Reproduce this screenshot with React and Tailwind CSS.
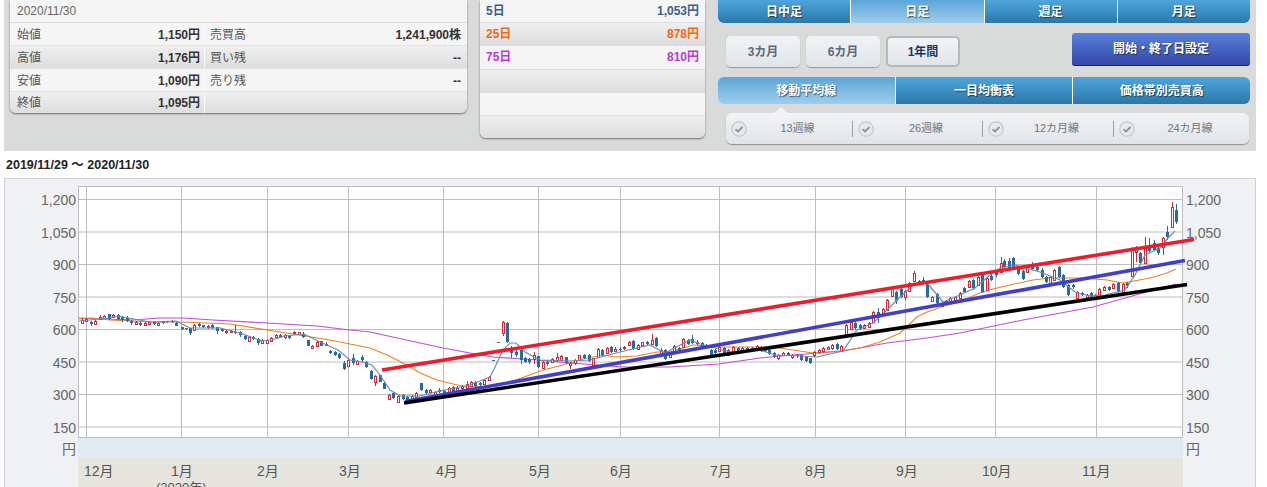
const font = "font-['Liberation_Sans','Noto_Sans_CJK_JP',sans-serif]";

const shadow = '[text-shadow:1px_1px_1px_rgba(0,0,0,0.55)]';

const ohlc = [
  ['始値', '1,150円', '売買高', '1,241,900株'],
  ['高値', '1,176円', '買い残', '--'],
  ['安値', '1,090円', '売り残', '--'],
  ['終値', '1,095円', '', ''],
];

const averages = [
  { label: '5日', value: '1,053円', color: 'text-[#3b5f8f]' },
  { label: '25日', value: '878円', color: 'text-[#ee6a10]' },
  { label: '75日', value: '810円', color: 'text-[#b838d8]' },
  { label: '', value: '', color: '' },
  { label: '', value: '', color: '' },
  { label: '', value: '', color: '' },
];

const spans = ['日中足', '日足', '週足', '月足'];
const ranges = ['3カ月', '6カ月', '1年間'];
const lineTabs = ['移動平均線', '一目均衡表', '価格帯別売買高'];
const lineChecks = [
  { label: '13週線', w: 'w-[127px]' },
  { label: '26週線', w: 'w-[130px]' },
  { label: '12カ月線', w: 'w-[131px]' },
  { label: '24カ月線', w: 'flex-1' },
];

const yLabels = ['1,200', '1,050', '900', '750', '600', '450', '300', '150'];
const gridY = [199.5, 232, 264.5, 297, 329.5, 362, 394.5, 427];
const gridX = [86, 181, 267, 348, 443, 538, 620, 719, 815, 905, 995, 1096];
const months = [
  { label: '12月', left: 'left-[6px]' },
  { label: '1月', left: 'left-[93px]' },
  { label: '2月', left: 'left-[179px]' },
  { label: '3月', left: 'left-[261px]' },
  { label: '4月', left: 'left-[358px]' },
  { label: '5月', left: 'left-[451px]' },
  { label: '6月', left: 'left-[532px]' },
  { label: '7月', left: 'left-[632px]' },
  { label: '8月', left: 'left-[727px]' },
  { label: '9月', left: 'left-[818px]' },
  { label: '10月', left: 'left-[904px]' },
  { label: '11月', left: 'left-[1004px]' },
];

// x, top, bottom, colour, wick top, wick bottom
const candles = [
  [82,320,323,'r',318,324],[86,319,321,'r',318,322],[91,322,324,'b',321,326],[95,321,324,'r',320,325],[100,317,319,'r',315,320],[104,316,318,'r',315,319],
  [109,314,319,'b',314,320],[113,315,317,'r',314,318],[118,315,319,'b',314,320],[122,317,320,'b',316,322],[127,318,321,'b',316,322],[131,321,323,'b',320,325],
  [136,322,324,'r',321,325],[140,323,325,'b',322,326],[145,323,325,'r',322,325],[149,322,324,'r',322,325],[154,322,324,'b',321,325],[158,323,325,'r',322,326],
  [163,322,323,'b',321,324],[167,321,322,'b',321,323],[172,321,322,'b',320,323],[176,323,326,'b',322,326],[182,327,329,'b',327,330],[186,328,329,'b',328,330],
  [190,328,333,'b',328,335],[194,325,330,'r',324,331],[199,324,326,'b',323,327],[203,325,327,'b',325,328],[208,326,327,'r',325,329],[212,325,328,'b',324,329],
  [217,327,331,'b',327,334],[222,329,331,'b',329,332],[226,331,332,'r',330,334],[231,331,332,'r',330,333],[235,332,333,'b',325,334],[240,332,335,'b',331,337],
  [245,336,339,'b',335,340],[249,337,341,'r',336,342],[253,337,339,'b',336,340],[258,339,343,'b',338,345],[262,340,343,'r',339,344],[267,340,343,'r',339,344],
  [271,338,341,'r',337,342],[276,335,337,'r',334,338],[280,335,337,'b',334,338],[285,335,337,'r',334,339],[289,336,338,'b',335,339],[294,332,333,'r',331,334],
  [299,332,334,'r',332,335],[303,334,337,'b',332,338],[308,340,346,'b',340,346],[312,346,348,'r',345,349],[317,342,346,'r',341,347],[321,341,346,'b',341,346],
  [326,344,345,'r',342,346],[330,351,353,'b',350,354],[335,352,355,'b',351,356],[339,354,358,'b',353,359],[344,363,369,'b',361,370],[348,360,366,'r',358,367],
  [353,358,363,'b',354,365],[357,361,364,'r',360,365],[362,357,360,'b',355,362],[366,362,367,'b',361,368],[371,371,379,'b',370,380],[375,376,382,'r',375,386],
  [380,375,382,'b',375,382],[384,383,389,'b',381,389],[389,395,399,'r',394,400],[393,393,398,'b',392,399],[398,396,402,'r',395,403],[403,395,399,'b',394,400],
  [407,397,401,'b',396,402],[412,396,399,'r',395,400],[416,393,397,'r',392,398],[421,383,390,'b',383,391],[426,390,393,'b',389,394],[430,390,392,'r',389,393],
  [435,392,395,'r',391,396],[439,390,392,'b',388,393],[444,391,394,'b',390,396],[449,388,392,'r',387,394],[453,387,392,'b',386,393],[457,388,391,'r',386,393],
  [462,386,388,'r',385,390],[467,384,388,'r',381,389],[471,382,386,'r',381,387],[475,382,386,'b',381,387],[480,383,385,'b',382,386],[484,380,384,'r',379,385],
  [489,377,380,'r',376,381],[493,360,361,'b',360,361],[498,342,343,'b',342,343],[503,322,333,'r',321,336],[507,323,342,'b',322,343],[511,348,353,'b',346,358],
  [516,352,355,'b',349,357],[521,350,360,'b',349,364],[525,358,362,'b',357,363],[529,359,362,'b',358,364],[534,355,359,'r',352,364],[538,356,367,'b',356,368],
  [543,362,368,'r',361,369],[547,362,364,'b',360,366],[552,359,362,'r',358,363],[557,357,360,'r',353,362],[561,356,360,'r',355,361],[566,357,363,'b',357,364],
  [570,363,365,'r',362,369],[575,360,363,'r',359,365],[579,355,360,'r',355,361],[584,355,358,'b',354,359],[589,355,361,'b',354,362],[593,358,365,'r',358,366],
  [598,349,357,'r',348,358],[602,350,355,'b',349,356],[607,348,353,'r',347,354],[611,347,352,'b',346,353],[615,349,351,'r',347,352],[620,349,350,'b',347,351],
  [624,347,348,'r',346,350],[629,342,345,'r',341,346],[633,341,349,'b',340,350],[638,345,349,'r',344,350],[642,342,345,'r',342,346],[647,342,344,'b',341,345],
  [652,340,344,'r',334,345],[656,338,346,'b',337,347],[661,350,353,'r',348,354],[665,350,359,'b',349,360],[670,353,357,'r',352,358],[674,346,351,'r',345,352],
  [679,348,350,'b',347,352],[683,339,347,'r',338,348],[688,340,344,'b',339,345],[692,339,343,'b',335,344],[697,342,343,'r',340,345],[702,343,347,'b',342,348],
  [706,345,347,'b',344,348],[711,350,355,'b',349,356],[715,350,353,'b',349,354],[719,347,351,'r',346,352],[724,348,353,'b',347,354],[728,350,355,'r',349,356],
  [733,347,351,'r',346,352],[738,348,351,'b',347,352],[742,348,350,'r',347,351],[747,348,350,'b',347,351],[752,348,350,'b',347,351],[757,346,350,'r',345,351],
  [761,347,351,'b',346,352],[765,349,351,'b',348,352],[769,350,354,'b',349,355],[774,353,357,'b',352,358],[778,355,358,'r',354,360],[783,353,355,'r',352,356],
  [788,353,355,'b',352,356],[792,355,357,'r',354,359],[797,355,356,'b',354,358],[801,355,360,'b',354,361],[806,357,361,'b',356,362],[810,358,363,'b',358,364],
  [814,352,355,'r',351,357],[819,350,352,'r',349,354],[823,348,351,'r',347,353],[828,347,349,'r',346,350],[832,345,348,'r',344,350],[837,344,349,'b',343,350],
  [841,346,351,'r',345,352],[846,325,334,'r',324,335],[851,322,329,'r',321,330],[855,323,328,'b',322,330],[860,325,329,'b',324,330],[864,325,328,'r',324,329],
  [869,323,327,'r',322,328],[873,312,322,'r',311,323],[878,312,315,'b',308,323],[883,309,313,'r',308,315],[887,300,310,'r',299,311],[892,288,296,'r',287,297],
  [896,292,301,'b',291,304],[901,289,297,'b',288,298],[905,291,297,'r',290,300],[909,283,291,'r',282,292],[914,273,281,'r',271,282],[919,281,284,'b',280,285],
  [923,280,283,'b',277,284],[927,284,297,'b',283,298],[932,297,301,'r',296,302],[937,294,303,'b',293,304],[942,303,306,'r',302,307],[946,301,303,'b',300,305],
  [950,298,301,'r',297,302],[955,297,302,'r',296,303],[960,293,298,'r',292,299],[964,288,292,'b',287,293],[969,281,287,'r',280,288],[973,280,288,'b',279,290],
  [978,277,285,'r',276,286],[982,273,292,'b',272,293],[987,278,290,'r',277,291],[991,276,280,'b',274,281],[996,272,275,'b',271,277],[1001,263,272,'r',257,273],
  [1004,261,267,'b',259,268],[1009,261,268,'b',258,269],[1013,258,267,'b',257,268],[1018,267,274,'b',266,275],[1023,271,279,'b',270,280],[1027,267,272,'r',266,273],
  [1032,264,269,'b',262,270],[1037,267,270,'b',266,272],[1042,270,277,'b',268,278],[1046,277,282,'b',276,283],[1050,277,283,'r',276,284],[1054,270,280,'r',269,281],
  [1059,267,277,'b',266,278],[1063,275,287,'b',274,288],[1068,285,295,'b',284,296],[1073,285,287,'b',284,289],[1077,292,298,'r',291,299],[1082,293,295,'b',292,296],
  [1087,295,297,'r',294,299],[1091,293,297,'b',292,298],[1095,295,297,'r',294,298],[1099,289,295,'r',288,296],[1104,287,290,'r',286,291],[1109,287,290,'b',286,291],
  [1113,284,288,'r',283,289],[1118,283,292,'b',282,293],[1123,284,292,'r',283,293],[1127,283,286,'b',282,288],[1132,248,276,'r',247,277],[1136,247,252,'r',246,262],
  [1140,253,263,'b',252,264],[1145,247,263,'r',237,264],[1149,245,251,'b',238,252],[1154,243,250,'b',240,251],[1158,248,253,'b',247,255],[1163,238,247,'r',237,255],
  [1167,232,237,'b',226,240],[1172,207,227,'r',202,228],[1176,210,222,'b',204,224],
];

const ma5 = '79,321 110,318 118,316 150,322 176,321 190,328 220,328 240,333 262,341 272,340 285,336 304,334 320,342 338,350 350,360 362,362 372,365 380,375 390,390 400,396 420,396 440,391 470,385 490,377 496,365 503,350 510,343 516,343 525,352 540,360 570,361 590,360 620,352 650,345 665,353 690,340 700,344 730,352 760,350 775,355 800,356 817,357 843,351 857,330 873,323 887,310 897,300 913,285 927,283 943,302 960,295 975,288 990,275 1000,268 1015,265 1040,272 1060,280 1075,292 1090,296 1105,295 1125,290 1135,275 1145,255 1160,248 1168,238 1175,231';
const ma25 = '79,319 92,318 110,320 150,322 180,322 230,324 280,332 330,340 350,344 370,348 387,355 403,363 420,373 437,380 453,384 467,387 498,386 510,382 527,376 543,370 563,365 583,359 603,355 615,357 637,356 657,352 670,352 693,345 720,347 753,347 773,347 793,350 813,353 840,351 860,348 880,342 900,333 917,317 927,312 947,305 960,302 977,294 993,289 1010,285 1033,280 1050,278 1083,278 1107,280 1123,283 1150,278 1167,273 1176,269';
const ma75 = '79,318 133,320 160,318 183,318 213,320 267,323 317,326 350,330 370,332 420,343 443,348 470,353 493,357 537,360 570,363 597,365 623,367 670,367 719,364 760,358 793,355 843,351 887,343 927,338 960,333 1023,320 1093,307 1143,293 1176,284';

function AverageTable() {
  return (
    <div className="w-[225px] h-[138px] mt-0 ml-[13px] rounded-b-md overflow-hidden shadow-[0_1px_2px_rgba(0,0,0,0.5)] flex flex-col">
      {averages.map((row, i) => (
        <div
          key={i}
          className={`flex-1 flex items-center justify-between pl-[6px] pr-[6px] text-xs font-bold border-b border-[#dcdcdc] last:border-b-0 ${row.color} ${i % 2 === 0 ? 'bg-[#f5f5f5]' : 'bg-gradient-to-b from-[#efefef] to-[#dddddd]'}`}
        >
          <span>{row.label}</span>
          <span>{row.value}</span>
        </div>
      ))}
    </div>
  );
}

function PriceTable() {
  return (
    <div className="w-[457px] h-[113px] ml-[6px] rounded-b-md overflow-hidden shadow-[0_1px_2px_rgba(0,0,0,0.5)] flex flex-col text-xs text-[#555]">
      <div className="h-[23px] bg-[#f5f5f5] border-b border-[#dcdcdc] flex items-center pl-[7px] text-[#6b6460]">2020/11/30</div>
      {ohlc.map((row, i) => (
        <div
          key={row[0]}
          className={`h-[23px] last:h-[21px] grid grid-cols-[195px_1fr] pt-[2px] last:pt-px border-b border-[#e2e2e2] last:border-b-0 ${i % 2 === 0 ? 'bg-[#f5f5f5]' : 'bg-gradient-to-b from-[#efefef] to-[#dddddd]'}`}
        >
          <div className="flex items-center justify-between pl-[7px] pr-[4px] border-r border-[#fafafa]">
            <span>{row[0]}</span>
            <b className="text-[#333]">{row[1]}</b>
          </div>
          <div className="flex items-center justify-between pl-[5px] pr-[6px]">
            <span>{row[2]}</span>
            <b className="text-[#333]">{row[3]}</b>
          </div>
        </div>
      ))}
    </div>
  );
}

function Tabs({ items, active, height }) {
  return (
    <div className={`flex rounded-b-md overflow-hidden ${height}`}>
      {items.map((item, i) => (
        <div
          key={item}
          className={`flex-1 flex items-center justify-center text-xs font-bold text-white border-r border-white last:border-r-0 ${shadow} ${i === active ? 'bg-gradient-to-b from-[#5aa5da] to-[#9fcdea]' : 'bg-gradient-to-b from-[#4fa5dc] to-[#2a78aa]'}`}
        >
          {item}
        </div>
      ))}
    </div>
  );
}

function CheckIcon() {
  return (
    <svg width="16" height="16" viewBox="0 0 16 16" className="shrink-0">
      <circle cx="8" cy="8" r="7.2" fill="#e8e9ec" stroke="#c4c7cc" strokeWidth="1.2" />
      <path d="M4.5 8.2 L7 10.4 L11.5 6" fill="none" stroke="#8c929a" strokeWidth="1.8" />
    </svg>
  );
}

function Controls() {
  return (
    <div className="w-[532px] ml-[13px] flex flex-col">
      <Tabs items={spans} active={1} height="h-[23px]" />
      <div className="flex items-start mt-[10px] h-[34px]">
        <div className="flex gap-[6px] ml-[8px] mt-[3px]">
          {ranges.map((r, i) => (
            <div
              key={r}
              className={`w-[74px] h-[31px] rounded-[5px] flex items-center justify-center text-xs font-bold bg-gradient-to-b from-[#f2f3f5] to-[#e1e4e9] ${i === 2 ? 'text-[#12396b] border-2 border-[#b5b7b8]' : 'text-[#5e6a7a] shadow-[0_1px_1px_rgba(0,0,0,0.3)]'}`}
            >
              {r}
            </div>
          ))}
        </div>
        <div className={`ml-auto w-[178px] h-[33px] rounded-[3px] flex items-center justify-center text-xs font-bold text-white bg-gradient-to-b from-[#5a80dc] to-[#3448a8] border-b border-[#1b2550] ${shadow}`}>
          開始・終了日設定
        </div>
      </div>
      <div className="mt-[10px]">
        <Tabs items={lineTabs} active={0} height="h-[27px] rounded-t-md" />
      </div>
      <div className="relative mt-[9px] ml-[8px] mr-px h-[31px] rounded-md bg-gradient-to-b from-[#f2f3f5] to-[#e1e4e9] shadow-[0_1px_1px_rgba(0,0,0,0.35)] flex items-center">
        <div className="absolute left-[48px] -top-[6px] w-0 h-0 border-x-[7px] border-x-transparent border-b-[6px] border-b-[#eef0f2]" />
        {lineChecks.map((c, i) => (
          <div key={c.label} className={`${c.w} flex items-center pl-[5px] h-[16px] ${i < 3 ? 'border-r border-[#9aa0a8]' : ''}`}>
            <CheckIcon />
            <span className="flex-1 text-center text-[11px] text-[#6c7684] pr-[4px]">{c.label}</span>
          </div>
        ))}
      </div>
    </div>
  );
}

function PriceChart() {
  return (
    <svg width="1105" height="252" viewBox="78 186 1105 252" className="block overflow-visible relative z-10">
      <rect x="78.5" y="186.5" width="1104" height="251" fill="#fff" stroke="#bdbdbd" />
      {gridY.map((y) => (
        <line key={y} x1="78" x2="1183" y1={y} y2={y} stroke="#bdbdbd" />
      ))}
      {gridX.map((x) => (
        <line key={x} x1={x + 0.5} x2={x + 0.5} y1="186" y2="438" stroke="#bdbdbd" />
      ))}
      <polyline points={ma75} fill="none" stroke="#c24adb" strokeWidth="1.1" />
      <polyline points={ma25} fill="none" stroke="#f07f1e" strokeWidth="1.1" />
      {candles.map(([x, top, bottom, c, wickTop, wickBottom]) => {
        const color = c === 'r' ? '#cf2a35' : '#2a6aa2';
        return (
          <g key={x}>
            <line x1={x + 0.5} x2={x + 0.5} y1={wickTop} y2={wickBottom} stroke={color} />
            {c === 'r' ? (
              <rect x={x - 0.5} y={top + 0.5} width="2" height={Math.max(bottom - top, 1)} fill="#fff" stroke={color} />
            ) : (
              <rect x={x - 1} y={top} width="3" height={Math.max(bottom - top, 1)} fill={color} />
            )}
          </g>
        );
      })}
      <polyline points={ma5} fill="none" stroke="#6a8cae" strokeWidth="1.2" />
      <line x1="382" y1="370" x2="1194" y2="239.5" stroke="#ee1c2b" strokeWidth="3.6" />
      <line x1="405" y1="401.5" x2="1185" y2="260.5" stroke="#3f3fca" strokeWidth="3.6" />
      <line x1="404" y1="403" x2="1187" y2="284.5" stroke="#000" strokeWidth="3.6" />
    </svg>
  );
}

function YAxis({ align }) {
  return (
    <div className={`flex flex-col pt-[5px] text-sm leading-[32.5px] text-[#666] ${align}`}>
      {yLabels.map((l) => (
        <span key={l}>{l}</span>
      ))}
      <span className="-mt-[11px]">円</span>
    </div>
  );
}

export default function App() {
  return (
    <div className={`w-[1267px] h-[487px] overflow-hidden bg-white ${font}`}>
      <div className="ml-1 w-[1252px] h-[151px] bg-[#d9dbda] flex items-start">
        <PriceTable />
        <AverageTable />
        <Controls />
      </div>
      <div className="h-[27px] pl-[6px] pt-[7px] text-[12.5px] leading-[14px] font-bold text-[#222]">2019/11/29 ～ 2020/11/30</div>
      <div className="ml-1 w-[1252px] h-[320px] border border-[#cdcfd2] bg-[#eff1f5] flex">
        <div className="w-[73px] pr-[2px]">
          <YAxis align="items-end" />
        </div>
        <div className="w-[1105px] flex flex-col pt-[7px]">
          <PriceChart />
          <div className="h-[21px] bg-[#dfebf1]" />
          <div className="relative h-[40px] bg-[#e5e5dd] text-sm text-[#555]">
            {months.map((m) => (
              <span key={m.label} className={`absolute top-[3px] ${m.left}`}>{m.label}</span>
            ))}
            <span className="absolute top-[21px] left-[78px] text-[13px]">(2020年)</span>
          </div>
        </div>
        <div className="flex-1 pl-[3px]">
          <YAxis align="items-start" />
        </div>
      </div>
    </div>
  );
}
